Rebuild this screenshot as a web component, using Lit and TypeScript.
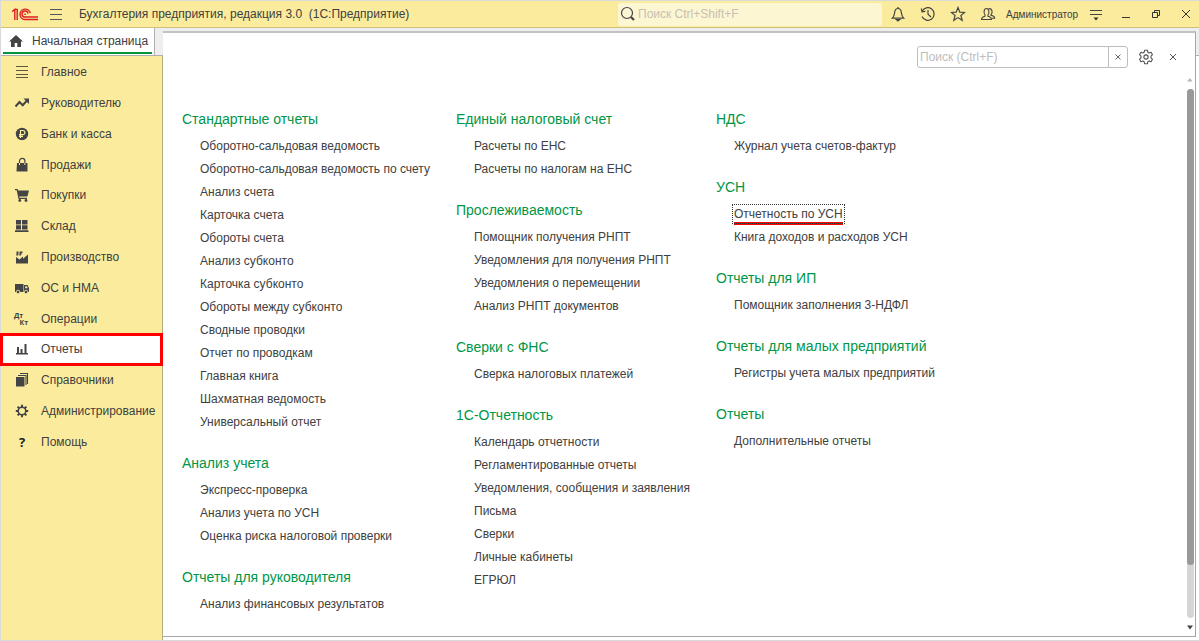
import { LitElement, html, css, svg, type TemplateResult } from "lit";
import { customElement, property, state } from "lit/decorators.js";
import { classMap } from "lit/directives/class-map.js";

const icons: Record<string, TemplateResult> = {
  lines: svg`<path d="M2 2.500h12M2 6.500h12M2 10.500h12M2 13.500h12" stroke="#5c583f" fill="none"/>`,
  trend: svg`<path d="M1.500 11.500 5.500 7l3.200 3.200L13 5.500" fill="none" stroke="#444" stroke-width="2"/><path d="M9.500 3.500H15V9z"/>`,
  ruble: svg`<circle cx="8" cy="8" r="6.200"/><path d="M6.500 12V4.500h2.300a2 2 0 0 1 0 4.200H5M5 10.400h4" fill="none" stroke="#fbed9e" stroke-width="1.200"/>`,
  bag: svg`<path d="M3 6h10.500v8.500H2.500z"/><path d="M5.500 8V4a2.700 2.700 0 0 1 5.400 0v4" fill="none" stroke="#444" stroke-width="1.200"/><path d="M5.500 6v2M10.900 6v2" stroke="#fbed9e"/>`,
  cart: svg`<path d="M1 2h2.600l.6 1.500H15l-1.600 6H5.200l.4 1.200H13V12H4.500L2.700 3.300H1z"/><circle cx="5.800" cy="13.500" r="1.400"/><circle cx="12" cy="13.500" r="1.400"/>`,
  stock: svg`<path d="M2 2h5v4.500H2zM8 2h5.500v4.500H8zM2 7.200h5v4.300H2zM8 7.200h5.500v4.300H8zM1 12.200h13.500V14H1z"/>`,
  factory: svg`<path d="M2 14.500V8l3.500 2.500L9 7.500v2.200l5-4.200v9zM2.500 2.500h2v3.500l-2 1zM5.500 2.500h3v1.700H7.300V6L5.500 7z"/>`,
  truck: svg`<path d="M1 4h8.500v8H1zM10 5h3.500L15 8v4h-5z"/><path d="M11.200 6.200h1.700l.9 2h-2.600z" fill="#fbed9e"/><circle cx="4" cy="12" r="1.800" stroke="#fbed9e" stroke-width=".8"/><circle cx="12" cy="12" r="1.800" stroke="#fbed9e" stroke-width=".8"/>`,
  chart: svg`<path d="M2 12h12v1.500H2zM3 6h2v6H3zM6.500 8h2v4h-2zM10.500 3h2v9h-2z"/>`,
  books: svg`<path d="M2 5h8.500v9.500H2z"/><path d="M4 3.500h8V13M6 1.500h7.500V12" fill="none" stroke="#444" stroke-width="1.100"/>`,
  cog: svg`<circle cx="8" cy="8" r="3.800" fill="none" stroke="#444" stroke-width="1.600"/><path d="M8 1.800v2.400M8 11.800v2.400M1.800 8h2.400M11.800 8h2.400M3.600 3.600l1.700 1.700M10.700 10.700l1.700 1.700M3.600 12.400l1.700-1.700M10.700 5.300l1.700-1.700" stroke="#444" stroke-width="2"/>`,
  home: svg`<path d="M8 2 1 8.500h2V14h3.700v-4h2.600v4H13V8.500h2z"/>`,
};

interface Section {
  label: string;
  icon: string;
}

const sections: Section[] = [
  { label: "Главное", icon: "lines" },
  { label: "Руководителю", icon: "trend" },
  { label: "Банк и касса", icon: "ruble" },
  { label: "Продажи", icon: "bag" },
  { label: "Покупки", icon: "cart" },
  { label: "Склад", icon: "stock" },
  { label: "Производство", icon: "factory" },
  { label: "ОС и НМА", icon: "truck" },
  { label: "Операции", icon: "dtkt" },
  { label: "Отчеты", icon: "chart" },
  { label: "Справочники", icon: "books" },
  { label: "Администрирование", icon: "cog" },
  { label: "Помощь", icon: "help" },
];

interface Group {
  title: string;
  items: string[];
}

const columns: Group[][] = [
  [
    {
      title: "Стандартные отчеты",
      items: [
        "Оборотно-сальдовая ведомость",
        "Оборотно-сальдовая ведомость по счету",
        "Анализ счета",
        "Карточка счета",
        "Обороты счета",
        "Анализ субконто",
        "Карточка субконто",
        "Обороты между субконто",
        "Сводные проводки",
        "Отчет по проводкам",
        "Главная книга",
        "Шахматная ведомость",
        "Универсальный отчет",
      ],
    },
    {
      title: "Анализ учета",
      items: ["Экспресс-проверка", "Анализ учета по УСН", "Оценка риска налоговой проверки"],
    },
    { title: "Отчеты для руководителя", items: ["Анализ финансовых результатов"] },
  ],
  [
    { title: "Единый налоговый счет", items: ["Расчеты по ЕНС", "Расчеты по налогам на ЕНС"] },
    {
      title: "Прослеживаемость",
      items: [
        "Помощник получения РНПТ",
        "Уведомления для получения РНПТ",
        "Уведомления о перемещении",
        "Анализ РНПТ документов",
      ],
    },
    { title: "Сверки с ФНС", items: ["Сверка налоговых платежей"] },
    {
      title: "1С-Отчетность",
      items: [
        "Календарь отчетности",
        "Регламентированные отчеты",
        "Уведомления, сообщения и заявления",
        "Письма",
        "Сверки",
        "Личные кабинеты",
        "ЕГРЮЛ",
      ],
    },
  ],
  [
    { title: "НДС", items: ["Журнал учета счетов-фактур"] },
    { title: "УСН", items: ["Отчетность по УСН", "Книга доходов и расходов УСН"] },
    { title: "Отчеты для ИП", items: ["Помощник заполнения 3-НДФЛ"] },
    { title: "Отчеты для малых предприятий", items: ["Регистры учета малых предприятий"] },
    { title: "Отчеты", items: ["Дополнительные отчеты"] },
  ],
];

const reset = css`
  * { box-sizing: border-box; }
  button, input { font: inherit; color: inherit; margin: 0; padding: 0; border: 0; background: none; }
  input { outline: none; min-width: 0; }
  ul, h2, h1 { margin: 0; padding: 0; list-style: none; font-weight: normal; }
  a { color: inherit; text-decoration: none; }
  svg { display: block; flex: none; }
  button { display: flex; align-items: center; justify-content: center; flex: none; }
`;

@customElement("title-bar")
export class TitleBar extends LitElement {
  static styles = [
    reset,
    css`
      :host { display: flex; align-items: center; height: 27px; background: #fbec9d; border-bottom: 1px solid #cfc07c; }
      .logo { margin-left: 11px; }
      .menu { width: 16px; margin-left: 8px; }
      h1 { flex: 1; margin-left: 15px; font-size: 12px; white-space: pre; }
      .search { display: flex; align-items: center; width: 264px; height: 23px; border-radius: 3px; background: #fdf6d3; padding-left: 2px; gap: 2px; }
      .search input { flex: 1; font-size: 12px; }
      .search input::placeholder { color: #c5c1b0; opacity: 1; }
      .tools { display: flex; margin: 0 3px 0 1px; }
      .tools button { width: 30px; }
      .user { font-size: 10px; min-width: 73px; }
      .filter { width: 34px; }
      .window { display: flex; gap: 4px; }
      .window button { width: 26px; }
    `,
  ];

  render() {
    return html`
      <svg class="logo" width="28" height="16" viewBox="0 0 28 16" fill="none" stroke="#dc1e23" stroke-width="1.400">
        <path d="M0 5.600 2.800 3.400V14M2.800 3.400H5.200V14"/>
        <path d="M18.300 7.200A5.200 5.200 0 1 0 13 13.500H26M16 7.600A3 3 0 1 0 13 11H26M13.800 8.300H12.300"/>
      </svg>
      <button class="menu" aria-label="Меню">
        <svg width="14" height="14" viewBox="0 0 14 14"><path d="M1 2.500h12M1 7.500h12M1 12.500h12" stroke="#555" /></svg>
      </button>
      <h1>Бухгалтерия предприятия, редакция 3.0  (1С:Предприятие)</h1>
      <label class="search">
        <svg width="16" height="16" viewBox="0 0 16 16" fill="none" stroke="#444"><circle cx="7" cy="7" r="5.500" stroke-width="1.200"/><path d="m11 11 3 3" stroke-width="2.200"/></svg>
        <input type="text" aria-label="Поиск" placeholder="Поиск Ctrl+Shift+F" />
      </label>
      <div class="tools">
        <button aria-label="Уведомления">
          <svg width="16" height="16" viewBox="0 0 16 16" fill="none" stroke="#444" stroke-width="1.200"><path d="M2.300 12.200c2-2 2-3 2.400-6C5 4 6.300 2.500 8 2.500S11 4 11.300 6.200c.4 3 .4 4 2.400 6zM8 2.500V1"/><path d="M6.300 13.500h3.400L8 15z" fill="#444"/></svg>
        </button>
        <button aria-label="История">
          <svg width="16" height="16" viewBox="0 0 16 16" fill="none" stroke="#444" stroke-width="1.200"><path d="M2 5.500A6.300 6.300 0 1 1 2 10.500M1.300 2.500l.7 3.300 3.400-.5M8 4v4.200l3 2.800"/></svg>
        </button>
        <button aria-label="Избранное">
          <svg width="16" height="16" viewBox="0 0 16 16" fill="none" stroke="#444" stroke-width="1.200"><path d="m8 1.500 1.800 4.600 4.900.3-3.800 3.100 1.300 4.800L8 11.600l-4.200 2.700 1.300-4.800L1.300 6.400l4.900-.3z"/></svg>
        </button>
        <button aria-label="Пользователь">
          <svg width="16" height="16" viewBox="0 0 16 16" fill="none" stroke="#444" stroke-width="1.100"><path d="M1.500 13.500c0-2 1-2.700 3.500-3.300V9C3.500 7.500 3.600 2.500 6.500 2.500S9.500 7.500 8 9v1.200c2.500.6 3.500 1.300 3.500 3.300z"/><path d="M8.500 2.700c3.600-.9 4.600 3.800 2.500 5.800v.9c2.500.4 3.700 1.100 3.700 2.800H12"/></svg>
        </button>
      </div>
      <span class="user">Администратор</span>
      <button class="filter" aria-label="Сервис">
        <svg width="14" height="14" viewBox="0 0 14 14"><path d="M1 3.500h12M1 7.500h12" stroke="#444" stroke-width="1.200"/><path d="M4.500 10.500h5l-2.500 3z" fill="#333"/></svg>
      </button>
      <div class="window">
        <button aria-label="Свернуть"><svg width="10" height="10" viewBox="0 0 10 10"><path d="M1 8.500h8" stroke="#333"/></svg></button>
        <button aria-label="Развернуть"><svg width="10" height="10" viewBox="0 0 10 10" fill="none" stroke="#333"><path d="M1.500 3.500h5v5h-5zM3.500 3.500v-2h5v5h-2"/></svg></button>
        <button aria-label="Закрыть"><svg width="10" height="10" viewBox="0 0 10 10"><path d="m1 1 8 8M9 1 1 9" stroke="#333"/></svg></button>
      </div>
    `;
  }
}

@customElement("section-nav")
export class SectionNav extends LitElement {
  @property() current = "";

  static styles = [
    reset,
    css`
      :host { display: block; flex: 1; background: #fbec9d; border-right: 1px solid #b5ad80; }
      ul { display: grid; grid-auto-rows: 1fr; height: 400px; margin-top: 1px; }
      li { display: flex; }
      a { flex: 1; display: flex; align-items: center; gap: 11px; padding-left: 13px; font-size: 12px; }
      .active { background: #fff; outline: 3px solid #f00; outline-offset: -2px; }
      .help { width: 16px; text-align: center; font: bold 13px "Open Sans", sans-serif; color: #222; }
      .dtkt { width: 14px; margin-right: 2px; display: grid; font: bold 7px/7px "Open Sans", sans-serif; }
      .dtkt span + span { text-align: right; }
    `,
  ];

  private icon(name: string) {
    if (name === "help") return html`<span class="help" aria-hidden="true">?</span>`;
    if (name === "dtkt") return html`<span class="dtkt" aria-hidden="true"><span>Дт</span><span>Кт</span></span>`;
    return html`<svg width="16" height="16" viewBox="0 0 16 16" fill="#444">${icons[name]}</svg>`;
  }

  render() {
    return html`<nav><ul>
      ${sections.map(
        (s) => html`<li><a href="#" class=${classMap({ active: s.label === this.current })}>${this.icon(s.icon)}<span>${s.label}</span></a></li>`,
      )}
    </ul></nav>`;
  }
}

@customElement("report-menu")
export class ReportMenu extends LitElement {
  @property() focused = "";

  static styles = [
    reset,
    css`
      :host { display: flex; flex-direction: column; background: #fff; border: 1px solid #a6a6a6; border-top: 2px solid #c2c2c2; border-left: 0; }
      .head { display: flex; justify-content: flex-end; align-items: center; padding: 13px 13px 0 0; }
      .find { display: flex; width: 211px; height: 22px; border: 1px solid #bdbdbd; border-radius: 3px; }
      .find input { flex: 1; padding-left: 2px; font-size: 12px; }
      .find input::placeholder { color: #bdbdbd; opacity: 1; }
      .find button { width: 19px; border-left: 1px solid #bdbdbd; }
      .gear { width: 36px; }
      .close { width: 18px; }
      .body { flex: 1; display: flex; justify-content: space-between; padding: 9px 1px 6px 19px; }
      .columns { display: grid; grid-template-columns: 236px 222px max-content; column-gap: 38px; padding-top: 32px; align-content: start; white-space: nowrap; }
      .column { display: flex; flex-direction: column; gap: 20px; }
      h2 { font-size: 14px; line-height: 20px; margin-bottom: 5px; color: #009646; }
      li { height: 23px; display: flex; align-items: center; padding-left: 18px; font-size: 12px; }
      .focused { outline: 1px dotted #333; outline-offset: 1px; box-shadow: 0 3px #f00; line-height: 16px; }
      .scroll { display: flex; flex-direction: column; align-items: center; justify-content: space-between; width: 8px; gap: 7px; }
      .track { flex: 1; width: 7px; border-radius: 4px; background: #d6d6d6; }
      .thumb { height: 90%; border-radius: 4px; background: #999; }
    `,
  ];

  render() {
    return html`
      <div class="head">
        <div class="find">
          <input type="text" aria-label="Поиск" placeholder="Поиск (Ctrl+F)" />
          <button aria-label="Очистить"><svg width="6" height="6" viewBox="0 0 6 6"><path d="m.5.5 5 5M5.500.5l-5 5" stroke="#666"/></svg></button>
        </div>
        <button class="gear" aria-label="Настройка">
          <svg width="16" height="16" viewBox="0 0 16 16" fill="none" stroke="#555" stroke-width="1.100" stroke-linejoin="round"><path d="M6.600 1.200h2.800l.4 2 1.300.8 2-.7 1.400 2.400-1.500 1.400v1.800l1.500 1.400-1.400 2.400-2-.7-1.300.8-.4 2H6.600l-.4-2-1.300-.8-2 .7-1.400-2.400L3 8.900V7.100L1.500 5.700l1.400-2.400 2 .7 1.300-.8z"/><circle cx="8" cy="8" r="2.100"/></svg>
        </button>
        <button class="close" aria-label="Закрыть"><svg width="8" height="8" viewBox="0 0 8 8"><path d="m1 1 6 6M7 1 1 7" stroke="#555"/></svg></button>
      </div>
      <div class="body">
        <div class="columns">
          ${columns.map(
            (groups) => html`<div class="column">
              ${groups.map(
                (g) => html`<section>
                  <h2>${g.title}</h2>
                  <ul>${g.items.map((t) => html`<li><a href="#" class=${classMap({ focused: t === this.focused })}>${t}</a></li>`)}</ul>
                </section>`,
              )}
            </div>`,
          )}
        </div>
        <div class="scroll" aria-hidden="true">
          <svg width="6" height="5" viewBox="0 0 6 5"><path d="M0 4.500h5.500L3 1z" fill="#b5b5b5"/></svg>
          <div class="track"><div class="thumb"></div></div>
          <svg width="6" height="5" viewBox="0 0 6 5"><path d="M0 .5h6L3 4.500z" fill="#444"/></svg>
        </div>
      </div>
    `;
  }
}

@customElement("app-root")
export class AppRoot extends LitElement {
  @state() private section = "Отчеты";

  static styles = [
    reset,
    css`
      :host { display: flex; flex-direction: column; min-height: 100vh; box-sizing: border-box; border: 1px solid #dadada; background: #fff; color: #404040; font-family: "Liberation Sans", Arial, sans-serif; }
      .work { flex: 1; display: grid; grid-template-columns: 162px 1fr; }
      .side { display: flex; flex-direction: column; }
      .tabs { height: 28px; display: flex; background: #eee; border-bottom: 1px solid #b0b0b0; }
      .tab { width: 154px; padding: 0 2px 1px 2px; background: #fff; border-right: 1px solid #b0b0b0; display: flex; }
      .tab a { flex: 1; display: flex; align-items: center; gap: 8px; padding: 2px 0 0 5px; font-size: 12px; border-bottom: 2px solid #009639; }
      .main { display: flex; padding: 3px 3px 3px 0; background: linear-gradient(#eee 27px, #b0b0b0 27px 28px, #fff 28px); }
      report-menu { flex: 1; }
    `,
  ];

  render() {
    return html`
      <title-bar></title-bar>
      <div class="work">
        <div class="side">
          <div class="tabs"><div class="tab"><a href="#">
            <svg width="16" height="16" viewBox="0 0 16 16" fill="#444">${icons.home}</svg><span>Начальная страница</span>
          </a></div></div>
          <section-nav .current=${this.section}></section-nav>
        </div>
        <main class="main"><report-menu focused="Отчетность по УСН"></report-menu></main>
      </div>
    `;
  }
}
